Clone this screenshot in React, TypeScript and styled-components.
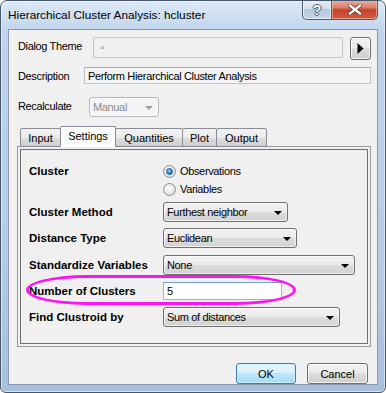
import React from "react";
import styled, { createGlobalStyle, css } from "styled-components";

const Global = createGlobalStyle`
  html, body { margin: 0; padding: 0; background: #ffffff; }
  body { font-family: "Liberation Sans", Arial, sans-serif; }
  * { box-sizing: border-box; }
`;

const Window = styled.div`
  width: 386px;
  height: 393px;
  display: flex;
  flex-direction: column;
  padding: 0 7px 7px 7px;
  border: 1px solid #47576b;
  border-radius: 7px 7px 6px 6px;
  background: linear-gradient(to bottom, #dde9f6 0px, #cfe0f2 14px, #bfd4ec 30px, #b7cde7 60%, #a9c0dc 100%);
  box-shadow: inset 0 0 0 1px rgba(255, 255, 255, 0.55);
  overflow: hidden;
`;

const TitleBar = styled.div`
  height: 28px;
  display: flex;
  align-items: flex-start;
  justify-content: space-between;
  flex-shrink: 0;
`;

const Title = styled.div`
  font-family: "Liberation Sans", Arial, sans-serif;
  font-size: 11.8px;
  color: #000;
  line-height: 28px;
  padding-left: 0px;
  white-space: nowrap;
`;

const CaptionButtons = styled.div`
  display: flex;
  margin-top: -1px;
  margin-right: 0px;
`;

const CaptionButton = styled.div<{ $kind: "help" | "close" }>`
  height: 20px;
  display: flex;
  align-items: center;
  justify-content: center;
  border: 1px solid #4b5d73;
  border-top: none;
  ${(p) =>
    p.$kind === "help"
      ? css`
          width: 29px;
          border-radius: 0 0 0 5px;
          border-right: none;
          background: linear-gradient(to bottom, #e6eef8 0%, #d2deed 45%, #b6c8df 50%, #c4d5ea 100%);
          box-shadow: inset 0 0 0 1px rgba(255, 255, 255, 0.6);
        `
      : css`
          width: 47px;
          border-radius: 0 0 5px 0;
          background: linear-gradient(to bottom, #ecb1a3 0%, #d97e69 40%, #c5442d 52%, #cf5b3f 100%);
          box-shadow: inset 0 0 0 1px rgba(255, 220, 210, 0.5);
        `}
`;

const HelpGlyph = styled.span`
  font-family: "Liberation Sans", Arial, sans-serif;
  font-weight: bold;
  font-size: 14px;
  color: #ffffff;
  text-shadow: 0 0 1px #3b4a5e, 1px 0 0 #55667c, -1px 0 0 #55667c, 0 1px 0 #55667c, 0 -1px 0 #55667c;
`;

const Client = styled.div`
  flex: 1;
  display: flex;
  flex-direction: column;
  background: #f0f0f0;
  border: 1px solid #8a99ad;
`;

const HeaderRow = styled.div<{ $h: number; $mt: number }>`
  display: flex;
  align-items: flex-start;
  height: ${(p) => p.$h}px;
  margin-top: ${(p) => p.$mt}px;
  padding-left: 9px;
`;

const Label = styled.div<{ $w: number; $h: number }>`
  width: ${(p) => p.$w}px;
  height: ${(p) => p.$h}px;
  flex-shrink: 0;
  display: flex;
  align-items: center;
  font-size: 11px;
  letter-spacing: -0.35px;
  color: #000;
  white-space: nowrap;
`;

const ThemeBox = styled.div`
  width: 250px;
  height: 21px;
  border: 1px solid #c6c6c6;
  border-radius: 2px;
  background: #f0f0f0;
  display: flex;
  align-items: center;
  padding-left: 6px;
  font-size: 8px;
  color: #8a8a8a;
`;

const ArrowButton = styled.div`
  width: 21px;
  height: 23px;
  margin-left: 7px;
  border: 1px solid #707070;
  border-radius: 3px;
  background: linear-gradient(to bottom, #f2f2f2 0%, #ebebeb 50%, #dddddd 50%, #cfcfcf 100%);
  box-shadow: inset 0 0 0 1px rgba(255, 255, 255, 0.7);
  display: flex;
  align-items: center;
  justify-content: center;
`;

const TextBox = styled.div<{ $w: number; $h: number; $white?: boolean }>`
  width: ${(p) => p.$w}px;
  height: ${(p) => p.$h}px;
  border: 1px solid ${(p) => (p.$white ? "#8fb7df" : "#c3c3c3")};
  border-top-color: ${(p) => (p.$white ? "#6fa3d6" : "#a9a9a9")};
  background: ${(p) => (p.$white ? "#ffffff" : "#f3f3f3")};
  display: flex;
  align-items: center;
  padding-left: 3px;
  font-size: 11px;
  letter-spacing: -0.35px;
  color: #000;
  white-space: nowrap;
`;

const Combo = styled.div<{ $w: number; $disabled?: boolean }>`
  width: ${(p) => p.$w}px;
  height: 20px;
  border: 1px solid ${(p) => (p.$disabled ? "#b5b9bd" : "#707070")};
  border-radius: 3px;
  background: ${(p) =>
    p.$disabled
      ? "#f4f4f4"
      : "linear-gradient(to bottom, #f3f3f3 0%, #ebebeb 50%, #dddddd 50%, #d2d2d2 100%)"};
  box-shadow: inset 0 0 0 1px rgba(255, 255, 255, 0.6);
  display: flex;
  align-items: center;
  justify-content: space-between;
  padding: 0 5px 0 3px;
  font-size: 11px;
  letter-spacing: -0.35px;
  color: ${(p) => (p.$disabled ? "#8b8b8b" : "#000")};
  white-space: nowrap;
`;

const Arrow = styled.span<{ $disabled?: boolean }>`
  width: 0;
  height: 0;
  border-left: 4px solid transparent;
  border-right: 4px solid transparent;
  border-top: 4px solid ${(p) => (p.$disabled ? "#9a9a9a" : "#000")};
  margin-top: 1px;
`;

const TabStrip = styled.div`
  display: flex;
  align-items: flex-end;
  height: 21px;
  margin-top: 9px;
  padding-left: 11px;
  position: relative;
  z-index: 1;
  margin-bottom: -1px;
`;

const Tab = styled.div<{ $w: number; $active?: boolean }>`
  width: ${(p) => p.$w}px;
  height: ${(p) => (p.$active ? 21 : 19)}px;
  margin-left: -1px;
  border: 1px solid #898c95;
  border-bottom: ${(p) => (p.$active ? "1px solid #fcfcfc" : "1px solid #898c95")};
  border-radius: 2px 2px 0 0;
  background: ${(p) =>
    p.$active ? "#fcfcfc" : "linear-gradient(to bottom, #f2f2f2 0%, #ebebeb 50%, #dddddd 50%, #cfcfcf 100%)"};
  display: flex;
  align-items: center;
  justify-content: center;
  padding-bottom: ${(p) => (p.$active ? 1 : 0)}px;
  font-size: 11px;
  color: #000;
  white-space: nowrap;
  &:first-child { margin-left: 0; }
`;

const TabPage = styled.div`
  width: 354px;
  height: 201px;
  margin-left: 8px;
  border: 1px solid #9a9a9a;
  background: #f0f0f0;
  padding: 2px;
`;

const InnerBox = styled.div`
  height: 100%;
  border: 1px solid #6f6f6f;
  display: flex;
  flex-direction: column;
  padding: 12px 0 0 8px;
`;

const FormRow = styled.div<{ $mt: number }>`
  display: flex;
  align-items: flex-start;
  margin-top: ${(p) => p.$mt}px;
  position: relative;
`;

const BoldLabel = styled.div<{ $h: number }>`
  width: 134px;
  height: ${(p) => p.$h}px;
  flex-shrink: 0;
  display: flex;
  align-items: center;
  font-size: 11.5px;
  font-weight: bold;
  color: #000;
  white-space: nowrap;
`;

const RadioGroup = styled.div`
  display: flex;
  flex-direction: column;
`;

const RadioLine = styled.div`
  height: 18px;
  display: flex;
  align-items: center;
  gap: 4px;
  font-size: 11px;
  letter-spacing: -0.35px;
  color: #000;
`;

const RadioCircle = styled.span<{ $checked?: boolean }>`
  width: 13px;
  height: 13px;
  border-radius: 50%;
  border: 1px solid #8a8d91;
  background: radial-gradient(circle at 45% 40%, #ffffff 0%, #e8e8e8 55%, #cfcfcf 100%);
  display: flex;
  align-items: center;
  justify-content: center;
  &::after {
    content: "";
    display: ${(p) => (p.$checked ? "block" : "none")};
    width: 7px;
    height: 7px;
    border-radius: 50%;
    background: radial-gradient(circle at 40% 35%, #9fd7f7 0%, #3c8fc9 45%, #15548b 100%);
    border: 1px solid #1d5d91;
    box-sizing: border-box;
  }
`;

const Highlight = styled.div`
  position: absolute;
  left: -3px;
  top: -7px;
  width: 270px;
  height: 30px;
  border: 3px solid #ff12f4;
  border-radius: 60px / 15px;
  pointer-events: none;
`;

const Footer = styled.div`
  display: flex;
  justify-content: flex-end;
  gap: 11px;
  margin-top: 16px;
  padding-right: 9px;
`;

const PushButton = styled.div<{ $w: number; $primary?: boolean }>`
  width: ${(p) => p.$w}px;
  height: 21px;
  border-radius: 3px;
  border: 1px solid ${(p) => (p.$primary ? "#3c7fb1" : "#707070")};
  background: ${(p) =>
    p.$primary
      ? "linear-gradient(to bottom, #eaf6fd 0%, #d9f0fc 50%, #bee6fd 50%, #a7d9f5 100%)"
      : "linear-gradient(to bottom, #f2f2f2 0%, #ebebeb 50%, #dddddd 50%, #cfcfcf 100%)"};
  box-shadow: inset 0 0 0 1px ${(p) => (p.$primary ? "rgba(200,240,255,0.9)" : "rgba(255,255,255,0.7)")};
  display: flex;
  align-items: center;
  justify-content: center;
  font-size: 11px;
  color: #000;
`;

export default function App() {
  return (
    <>
      <Global />
      <Window>
        <TitleBar>
          <Title>Hierarchical Cluster Analysis: hcluster</Title>
          <CaptionButtons>
            <CaptionButton $kind="help">
              <HelpGlyph>?</HelpGlyph>
            </CaptionButton>
            <CaptionButton $kind="close">
              <svg width="14" height="11" viewBox="0 0 14 11">
                <path d="M2 1.5 L12 9.5 M12 1.5 L2 9.5" stroke="#6b2a1e" strokeWidth="4" strokeLinecap="square" />
                <path d="M2 1.5 L12 9.5 M12 1.5 L2 9.5" stroke="#ffffff" strokeWidth="2.4" strokeLinecap="square" />
              </svg>
            </CaptionButton>
          </CaptionButtons>
        </TitleBar>
        <Client>
          <HeaderRow $h={23} $mt={7}>
            <Label $w={75} $h={17}>Dialog Theme</Label>
            <ThemeBox>×</ThemeBox>
            <ArrowButton>
              <svg width="7" height="11" viewBox="0 0 7 11">
                <path d="M0.5 0 L6.5 5.5 L0.5 11 Z" fill="#000" />
              </svg>
            </ArrowButton>
          </HeaderRow>
          <HeaderRow $h={17} $mt={7}>
            <Label $w={66} $h={17}>Description</Label>
            <TextBox $w={287} $h={17}>Perform Hierarchical Cluster Analysis</TextBox>
          </HeaderRow>
          <HeaderRow $h={20} $mt={13}>
            <Label $w={71} $h={18}>Recalculate</Label>
            <Combo $w={70} $disabled>
              Manual
              <Arrow $disabled />
            </Combo>
          </HeaderRow>
          <TabStrip>
            <Tab $w={41}>Input</Tab>
            <Tab $w={56} $active>Settings</Tab>
            <Tab $w={68}>Quantities</Tab>
            <Tab $w={35}>Plot</Tab>
            <Tab $w={51}>Output</Tab>
          </TabStrip>
          <TabPage>
            <InnerBox>
              <FormRow $mt={0}>
                <BoldLabel $h={18}>Cluster</BoldLabel>
                <RadioGroup>
                  <RadioLine>
                    <RadioCircle $checked />
                    Observations
                  </RadioLine>
                  <RadioLine>
                    <RadioCircle />
                    Variables
                  </RadioLine>
                </RadioGroup>
              </FormRow>
              <FormRow $mt={4}>
                <BoldLabel $h={20}>Cluster Method</BoldLabel>
                <Combo $w={125}>
                  Furthest neighbor
                  <Arrow />
                </Combo>
              </FormRow>
              <FormRow $mt={6}>
                <BoldLabel $h={20}>Distance Type</BoldLabel>
                <Combo $w={134}>
                  Euclidean
                  <Arrow />
                </Combo>
              </FormRow>
              <FormRow $mt={7}>
                <BoldLabel $h={20}>Standardize Variables</BoldLabel>
                <Combo $w={192}>
                  None
                  <Arrow />
                </Combo>
              </FormRow>
              <FormRow $mt={7}>
                <BoldLabel $h={18}>Number of Clusters</BoldLabel>
                <TextBox $w={119} $h={18} $white>5</TextBox>
                <Highlight />
              </FormRow>
              <FormRow $mt={7}>
                <BoldLabel $h={20}>Find Clustroid by</BoldLabel>
                <Combo $w={177}>
                  Sum of distances
                  <Arrow />
                </Combo>
              </FormRow>
            </InnerBox>
          </TabPage>
          <Footer>
            <PushButton $w={60} $primary>OK</PushButton>
            <PushButton $w={61}>Cancel</PushButton>
          </Footer>
        </Client>
      </Window>
    </>
  );
}
